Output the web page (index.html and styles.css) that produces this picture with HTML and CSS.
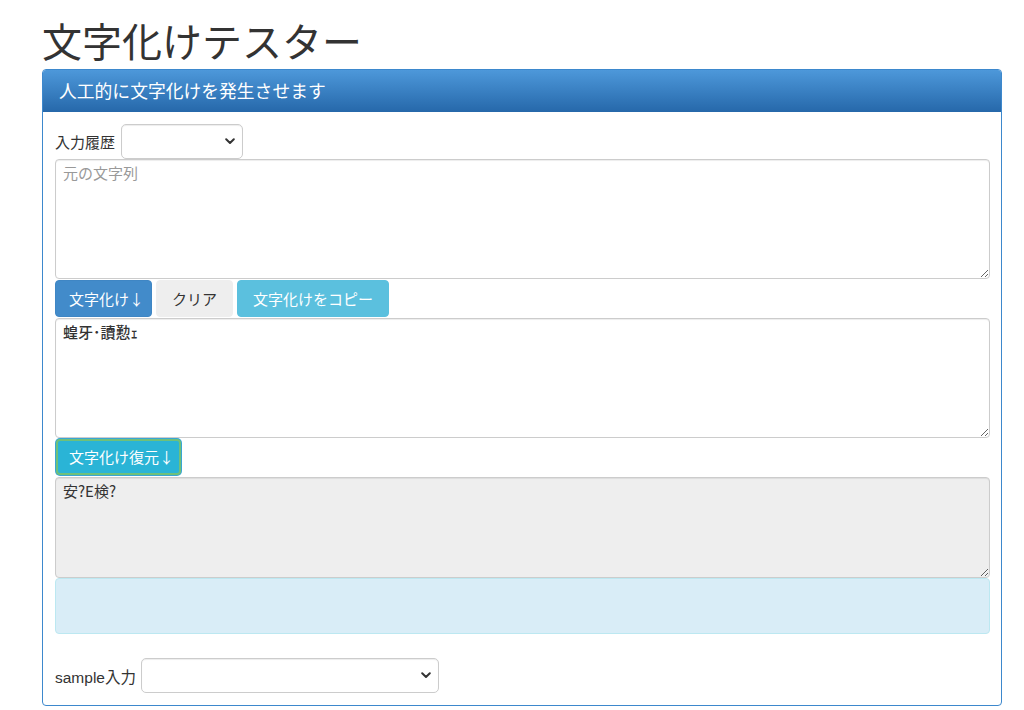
FILE: index.html
```
<!DOCTYPE html>
<html lang="ja">
<head>
<meta charset="utf-8">
<title>文字化けテスター</title>
<link rel="stylesheet" href="styles.css">
</head>
<body>
<div class="container">
  <h1 class="title">文字化けテスター</h1>
  <div class="panel">
    <div class="panel-heading">人工的に文字化けを発生させます</div>
    <div class="panel-body">
      <div class="inline-row">
        <label class="label">入力履歴</label>
        <span class="select-wrap select-history">
          <select class="select"><option></option></select>
          <svg class="chev" width="10" height="7" viewBox="0 0 10 7"><path d="M1.2 1.3 L5 5 L8.8 1.3" fill="none" stroke="#333" stroke-width="2" stroke-linecap="round" stroke-linejoin="round"/></svg>
        </span>
      </div>
      <textarea class="textarea ta-source" placeholder="元の文字列"></textarea>
      <div class="btn-row">
        <button class="btn btn-primary">文字化け<span class="arrow">↓</span></button>
        <button class="btn btn-default">クリア</button>
        <button class="btn btn-info">文字化けをコピー</button>
      </div>
      <textarea class="textarea ta-garbled">蝗牙･讀懃ｪ</textarea>
      <div class="btn-row restore-row">
        <button class="btn btn-info btn-focus">文字化け復元<span class="arrow">↓</span></button>
      </div>
      <textarea class="textarea ta-restored" readonly>安?E検?</textarea>
      <div class="alert-info"></div>
      <div class="inline-row sample-row">
        <label class="label">sample入力</label>
        <span class="select-wrap select-sample">
          <select class="select"><option></option></select>
          <svg class="chev" width="10" height="7" viewBox="0 0 10 7"><path d="M1.2 1.3 L5 5 L8.8 1.3" fill="none" stroke="#333" stroke-width="2" stroke-linecap="round" stroke-linejoin="round"/></svg>
        </span>
      </div>
    </div>
  </div>
</div>
</body>
</html>
```
FILE: styles.css
```
* { box-sizing: border-box; }
body {
  margin: 0;
  background: #fff;
  color: #333;
  font-family: "Liberation Sans", "Noto Sans CJK JP", sans-serif;
  font-size: 15px;
}
.container {
  margin-left: 42px;
  width: 960px;
}
.title {
  margin: 0;
  padding-top: 16px;
  font-size: 40px;
  line-height: 48px;
  font-weight: 400;
  color: #333;
  font-family: "Noto Sans CJK JP", sans-serif;
}
.panel {
  margin-top: 5px;
  border: 1px solid #3d88cd;
  border-radius: 4px;
  background: #fff;
}
.panel-heading {
  height: 42px;
  display: flex;
  align-items: center;
  padding: 0 16px 2px;
  color: #fff;
  font-size: 17.8px;
  font-family: "Noto Sans CJK JP", sans-serif;
  background: linear-gradient(to bottom, #4d98da 0%, #2668aa 100%);
  border-radius: 3px 3px 0 0;
}
.panel-body {
  padding: 12px 11px 12px 12px;
}
.inline-row {
  display: flex;
  align-items: center;
}
.label {
  margin-right: 6px;
  font-size: 15px;
}
.sample-row .label {
  font-size: 15.5px;
  margin-right: 5px;
}
.select-wrap {
  position: relative;
  display: inline-block;
}
.select {
  appearance: none;
  -webkit-appearance: none;
  display: block;
  height: 35px;
  border: 1px solid #ccc;
  border-radius: 5px;
  background: #fff;
  box-shadow: inset 0 1px 1px rgba(0,0,0,.075);
  font: inherit;
}
.select-history .select { width: 122px; }
.select-sample .select { width: 298px; height: 35px; }
.chev {
  position: absolute;
  right: 8px;
  top: 14px;
  pointer-events: none;
}
.textarea {
  display: block;
  width: 100%;
  margin: 0;
  border: 1px solid #ccc;
  border-radius: 4px;
  padding: 3px 7px;
  font-family: "Noto Sans CJK JP", sans-serif;
  font-size: 15px;
  line-height: 20px;
  color: #555;
  background: #fff;
  box-shadow: inset 0 1px 1px rgba(0,0,0,.075);
}
.textarea::placeholder { color: #999; }
.ta-source { height: 120px; }
.ta-garbled { height: 120px; color: #333; font-weight: 500; }
.ta-restored { height: 101px; background: #eee; color: #333; }
.btn-row {
  display: flex;
  gap: 4px;
  margin: 1px 0;
}
.restore-row {
  margin: 1px 0 2px 1px;
}
.btn {
  height: 37px;
  padding: 0 15px;
  border: 1px solid transparent;
  border-radius: 4px;
  font-family: "Noto Sans CJK JP", sans-serif;
  font-size: 15px;
  line-height: 35px;
  white-space: nowrap;
  cursor: pointer;
}
.arrow {
  font-family: "Noto Sans CJK JP", sans-serif;
  margin-right: -7px;
}
.btn-primary {
  padding: 0 14px 0 13px;
  background: #428bca;
  border-color: #3f86c4;
  color: #fff;
}
.btn-default {
  background: #eee;
  border-color: #eee;
  color: #333;
}
.btn-info {
  background: #5bc0de;
  border-color: #5bc0de;
  color: #fff;
}
.btn-focus {
  background: #2ab4d6;
  border: 2px solid #6fc07a;
  box-shadow: 0 0 0 1px #38a6d4;
  height: 36px;
  padding: 0 12px 0 11px;
  line-height: 32px;
}
.alert-info {
  height: 56px;
  background: #d9edf7;
  border: 1px solid #bce8f1;
  border-radius: 4px;
}
.sample-row {
  margin-top: 24px;
}
```
